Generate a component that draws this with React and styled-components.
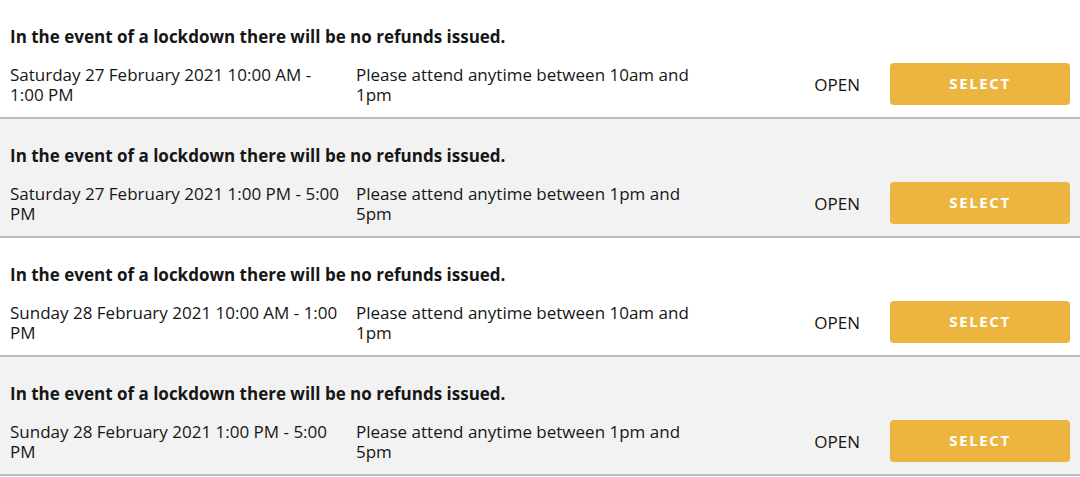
import React from 'react';
import styled, { createGlobalStyle } from 'styled-components';

const GlobalStyle = createGlobalStyle`
  body {
    margin: 0;
    background: #ffffff;
    font-family: 'Open Sans', 'Noto Sans', sans-serif;
    color: #161616;
  }
`;

const List = styled.div`
  width: 1080px;
`;

const Session = styled.div`
  background: ${(p) => (p.$shaded ? '#f2f2f2' : '#ffffff')};
  border-bottom: 2px solid #bdbdbd;
  padding: 26px 10px 12px 10px;
  height: 119px;
  box-sizing: border-box;
`;

const Notice = styled.div`
  font-size: 17px;
  font-weight: 700;
  line-height: 22px;
  margin-bottom: 15px;
`;

const Details = styled.div`
  display: grid;
  grid-template-columns: 336px 340px 1fr 180px;
  column-gap: 10px;
  align-items: center;
  height: 42px;
`;

const Cell = styled.div`
  font-size: 17px;
  line-height: 20px;
  padding-top: 2px;
`;

const Status = styled.div`
  font-size: 17px;
  line-height: 20px;
  text-align: right;
  padding-right: 20px;
  padding-top: 2px;
`;

const SelectButton = styled.button`
  height: 42px;
  width: 180px;
  border: none;
  border-radius: 4px;
  background: #ecb53f;
  color: #ffffff;
  font-family: 'Open Sans', sans-serif;
  font-weight: 700;
  font-size: 15px;
  letter-spacing: 1.6px;
  cursor: pointer;
  padding: 0 0 2px 0;
`;

const sessions = [
  {
    date: 'Saturday 27 February 2021 10:00 AM - 1:00 PM',
    note: 'Please attend anytime between 10am and 1pm',
  },
  {
    date: 'Saturday 27 February 2021 1:00 PM - 5:00 PM',
    note: 'Please attend anytime between 1pm and 5pm',
  },
  {
    date: 'Sunday 28 February 2021 10:00 AM - 1:00 PM',
    note: 'Please attend anytime between 10am and 1pm',
  },
  {
    date: 'Sunday 28 February 2021 1:00 PM - 5:00 PM',
    note: 'Please attend anytime between 1pm and 5pm',
  },
];

export default function App() {
  return (
    <>
      <GlobalStyle />
      <List>
        {sessions.map((s, i) => (
          <Session key={i} $shaded={i % 2 === 1}>
            <Notice>In the event of a lockdown there will be no refunds issued.</Notice>
            <Details>
              <Cell>{s.date}</Cell>
              <Cell>{s.note}</Cell>
              <Status>OPEN</Status>
              <SelectButton>SELECT</SelectButton>
            </Details>
          </Session>
        ))}
      </List>
    </>
  );
}
